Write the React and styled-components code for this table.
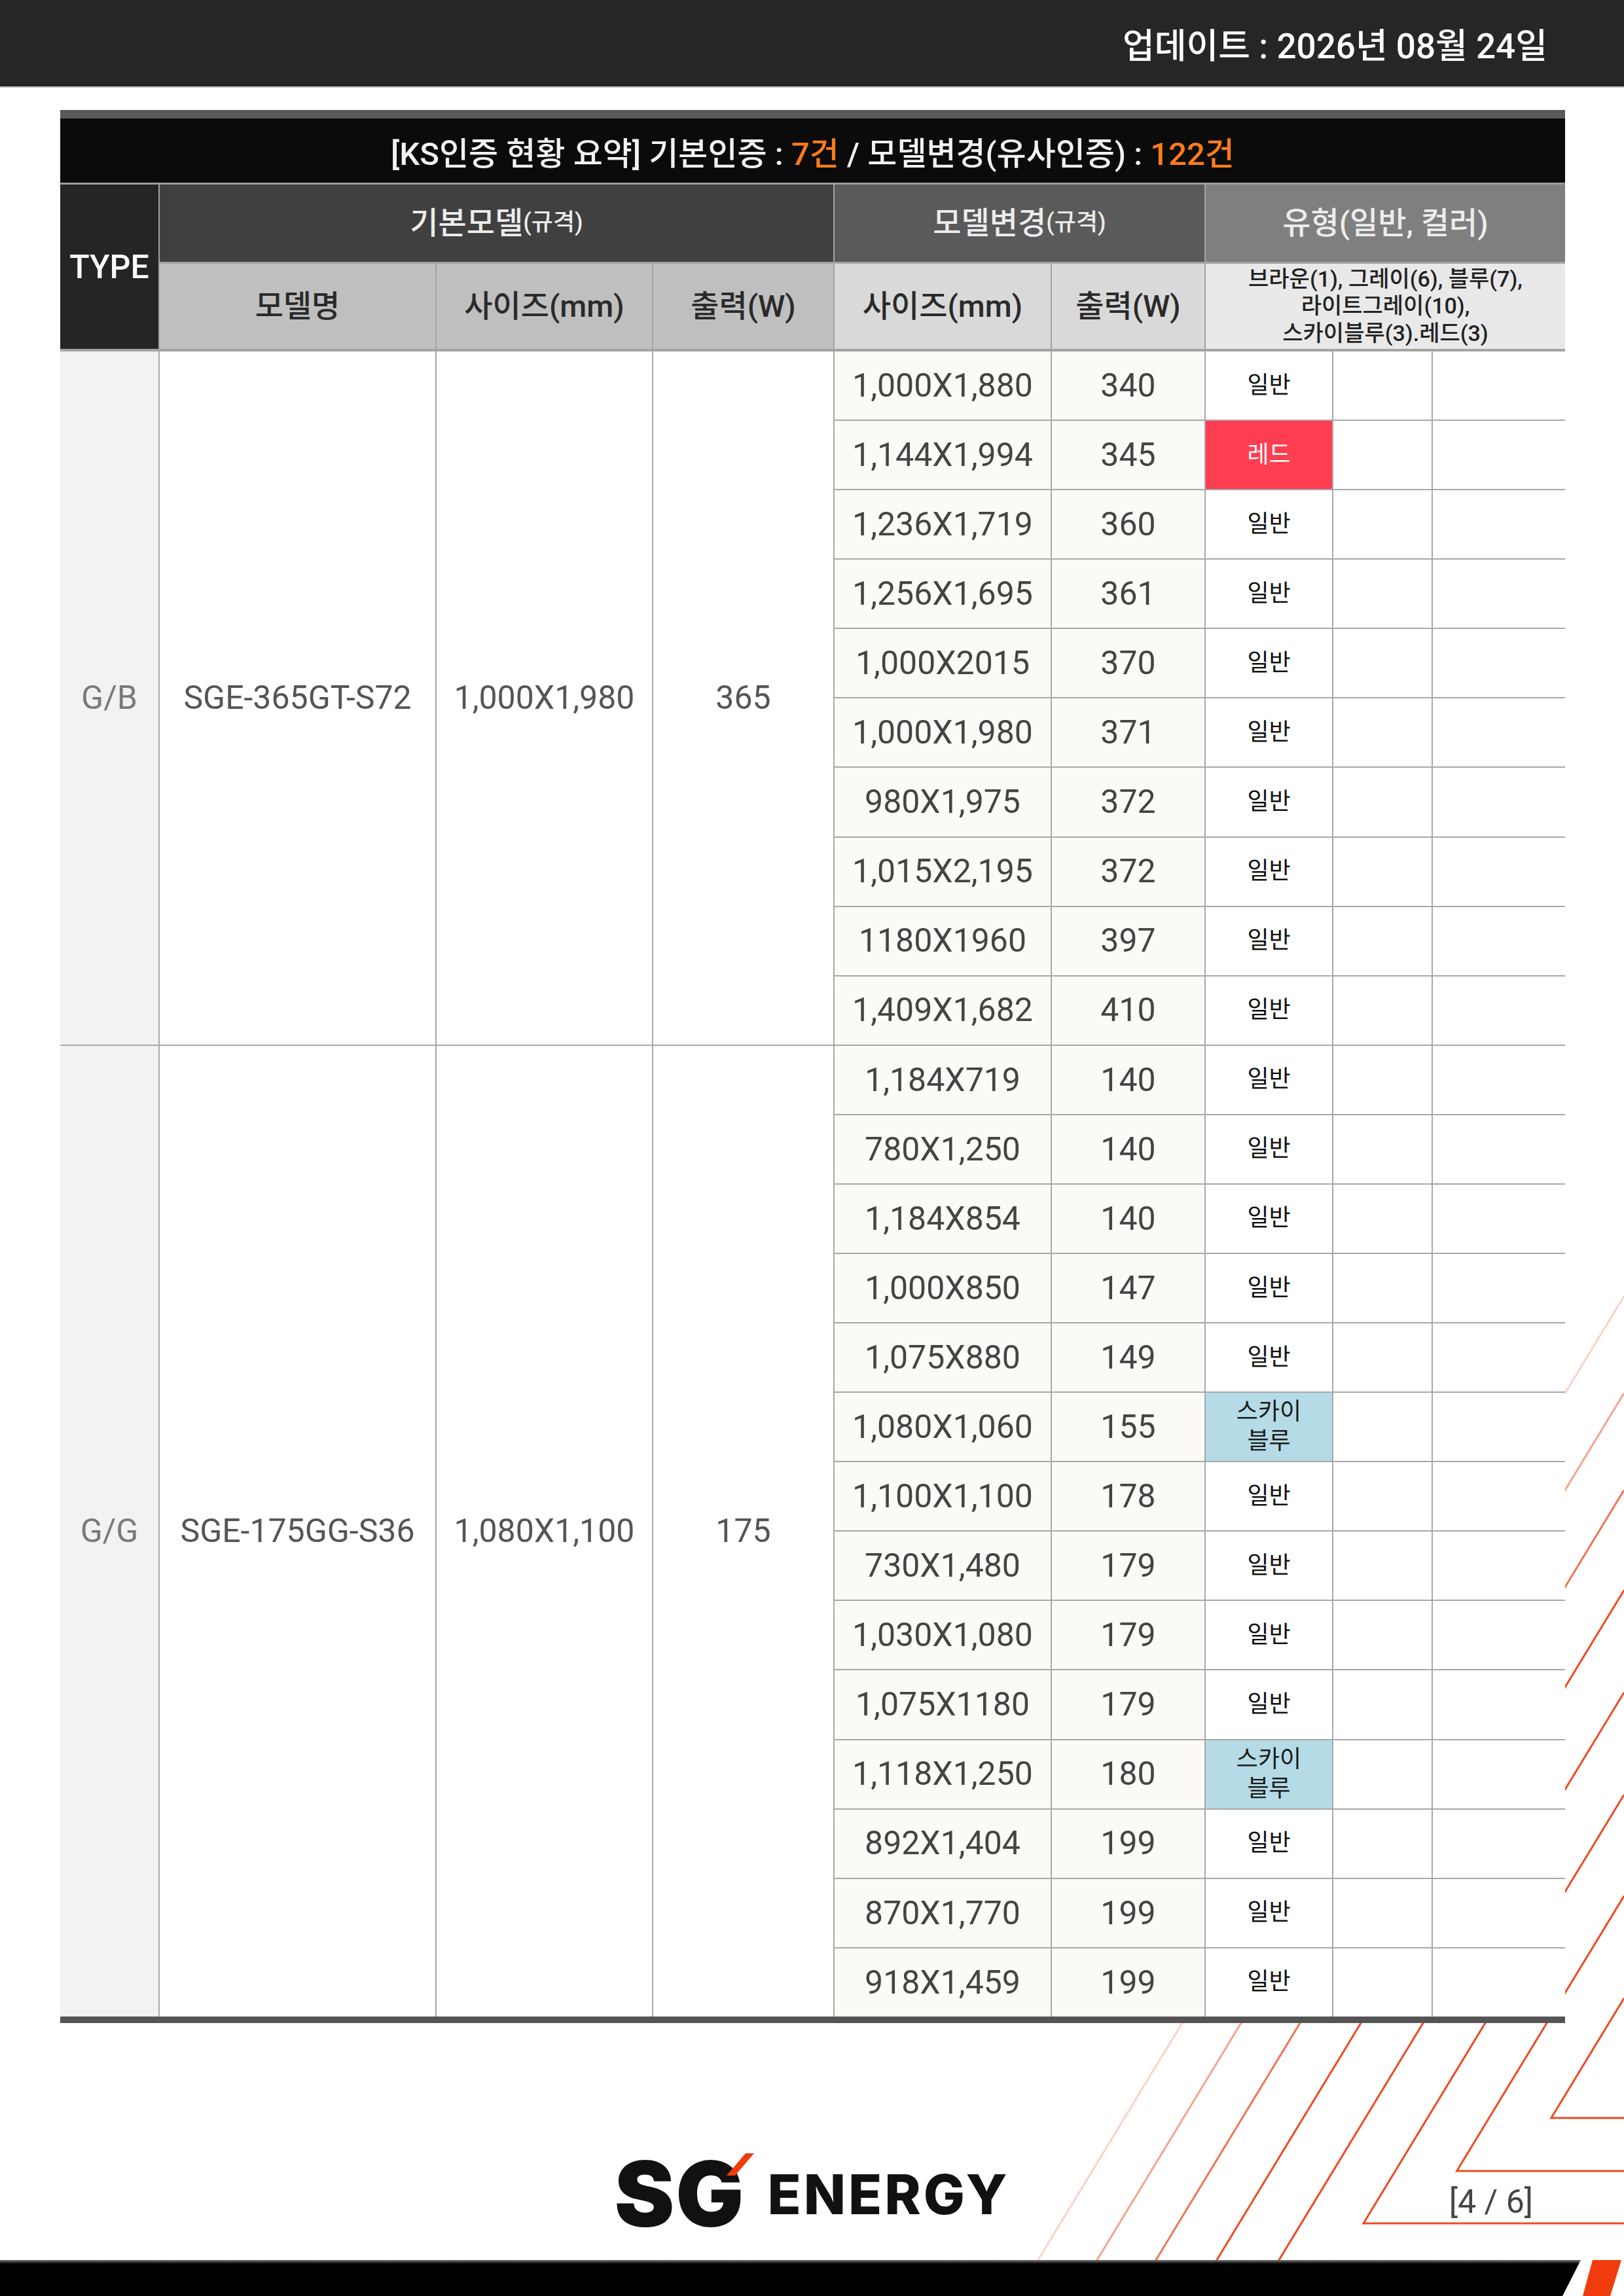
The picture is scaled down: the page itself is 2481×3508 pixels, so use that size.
import React from "react";
import styled, { createGlobalStyle } from "styled-components";

const GlobalStyle = createGlobalStyle`
    html, body {
        margin: 0;
        padding: 0;
        background: #fff;
    }
    body {
        font-family: Roboto, "Noto Sans CJK KR", sans-serif;
    }
`;

// column widths of the sheet, lines are the 2px grid gaps
const COLS = "150px 421px 329px 275px 330px 233px 193px 150px 202px";
const ORANGE = "#ee4a24";
const SLOPE = 1.645;

const STRIPES = [
    { c: 3685, color: "#f8d3c9" },
    { c: 3775, color: "#f3a48f" },
    { c: 3865, color: "#ef7555" },
    { c: 3958, color: ORANGE },
    { c: 4053, color: ORANGE },
    { c: 4148, color: ORANGE, foot: 3397 },
    { c: 4242, color: ORANGE, foot: 3317 },
    { c: 4337, color: ORANGE, foot: 3236 },
];

const GROUPS = [
    {
        type: "G/B",
        model: "SGE-365GT-S72",
        size: "1,000X1,980",
        power: "365",
        rows: [
            ["1,000X1,880", "340", "일반"],
            ["1,144X1,994", "345", "레드"],
            ["1,236X1,719", "360", "일반"],
            ["1,256X1,695", "361", "일반"],
            ["1,000X2015", "370", "일반"],
            ["1,000X1,980", "371", "일반"],
            ["980X1,975", "372", "일반"],
            ["1,015X2,195", "372", "일반"],
            ["1180X1960", "397", "일반"],
            ["1,409X1,682", "410", "일반"],
        ],
    },
    {
        type: "G/G",
        model: "SGE-175GG-S36",
        size: "1,080X1,100",
        power: "175",
        rows: [
            ["1,184X719", "140", "일반"],
            ["780X1,250", "140", "일반"],
            ["1,184X854", "140", "일반"],
            ["1,000X850", "147", "일반"],
            ["1,075X880", "149", "일반"],
            ["1,080X1,060", "155", "스카이블루"],
            ["1,100X1,100", "178", "일반"],
            ["730X1,480", "179", "일반"],
            ["1,030X1,080", "179", "일반"],
            ["1,075X1180", "179", "일반"],
            ["1,118X1,250", "180", "스카이블루"],
            ["892X1,404", "199", "일반"],
            ["870X1,770", "199", "일반"],
            ["918X1,459", "199", "일반"],
        ],
    },
];

const KIND = {
    일반: { bg: "#fff", fg: "#111", label: "일반" },
    레드: { bg: "#ff3d51", fg: "#fff", label: "레드" },
    스카이블루: {
        bg: "#b4dbe6",
        fg: "#1a1a1a",
        label: (
            <>
                스카이
                <br />
                블루
            </>
        ),
    },
};

const Page = styled.div`
    position: relative;
    width: 2481px;
    height: 3508px;
    overflow: hidden;
    background: #fff;
`;

const Stripes = styled.svg`
    position: absolute;
    left: 0;
    top: 0;
    z-index: 0;
`;

const Layer = styled.div`
    position: relative;
    z-index: 1;
    height: 100%;
    display: flex;
    flex-direction: column;
`;

const TopBar = styled.header`
    height: 132px;
    background: #262626;
    border-bottom: 2px solid #c4c4c4;
    display: flex;
    align-items: center;
    justify-content: flex-end;
    padding-right: 117px;
    color: #fff;
    font-size: 53px;
    font-weight: 500;
`;

const Sheet = styled.section`
    width: 2299px;
    margin: 34px 0 0 92px;
`;

const TitleBar = styled.div`
    height: 98px;
    border-top: 13px solid #5a5a5a;
    border-bottom: 3px solid #9c9c9c;
    background: #0b0b0b;
    display: flex;
    align-items: center;
    justify-content: center;
    color: #f2f2f2;
    font-size: 49px;
    font-weight: 500;
    .hl {
        color: #ff7b1c;
    }
`;

const HeadGrid = styled.div`
    display: grid;
    grid-template-columns: ${COLS};
    grid-template-rows: 118px 130px;
    column-gap: 2px;
    row-gap: 3px;
    background: #a3a3a3;
    border-bottom: 4px solid #a3a3a3;
`;

const HeadCell = styled.div`
    grid-column: span ${(p) => p.$span || 1};
    grid-row: span ${(p) => p.$rows || 1};
    display: flex;
    align-items: center;
    justify-content: center;
    text-align: center;
    background: ${(p) => p.$bg};
    color: ${(p) => p.$fg || "#2a2a2a"};
    font-size: ${(p) => p.$size || 47}px;
    font-weight: 500;
    line-height: ${(p) => p.$lh || 1.2};
    small {
        font-size: 36px;
        font-weight: 500;
    }
`;

const BodyGrid = styled.div`
    display: grid;
    grid-template-columns: ${COLS};
    grid-auto-rows: 104.08px;
    gap: 2px;
    background: #a8a8a8;
    border-bottom: 10px solid #555;
`;

const Cell = styled.div`
    grid-row: span ${(p) => p.$rows || 1};
    display: flex;
    align-items: center;
    justify-content: center;
    text-align: center;
    background: ${(p) => p.$bg || "#fff"};
    color: ${(p) => p.$fg || "#444"};
    font-size: ${(p) => p.$size || 50}px;
    line-height: 1.25;
`;

const Footer = styled.footer`
    flex: 1;
    display: grid;
    grid-template-columns: 1fr auto 1fr;
    align-items: end;
    padding: 0 139px 48px;
`;

const Logo = styled.div`
    grid-column: 2;
    display: flex;
    align-items: center;
    color: #111;
    font-family: Inter, "Liberation Sans", sans-serif;
`;

const LogoMark = styled.div`
    position: relative;
    font-size: 138px;
    font-weight: 900;
    line-height: 0.76;
    letter-spacing: 2px;
    svg {
        position: absolute;
        top: -10px;
        right: -14px;
    }
`;

const LogoWord = styled.div`
    margin-left: 34px;
    font-size: 84px;
    font-weight: 800;
    line-height: 1;
    letter-spacing: 4px;
`;

const PageNo = styled.div`
    justify-self: end;
    margin-bottom: 12px;
    color: #444;
    font-size: 50px;
`;

const BottomBar = styled.div`
    height: 55px;
    display: flex;
`;

const BlackBand = styled.div`
    width: 2415px;
    background: linear-gradient(to bottom, #777 0, #000 6px, #000 100%);
    clip-path: polygon(0 0, 100% 0, calc(100% - 28px) 100%, 0 100%);
`;

const OrangeBand = styled.div`
    width: 59px;
    margin-left: 3px;
    background: #f03c0c;
    clip-path: polygon(15px 0, 100% 0, 42px 100%, 0 100%);
`;

function StripeLayer() {
    return (
        <Stripes width="2481" height="3508" viewBox="0 0 2481 3508">
            {STRIPES.map((s) => {
                const top = (s.c - 2481) * SLOPE;
                const endY = s.foot || 3508;
                const endX = s.c - endY / SLOPE;
                const pts = s.foot
                    ? `2481,${top} ${endX},${endY} 2481,${endY}`
                    : `2481,${top} ${endX},${endY}`;
                return (
                    <polyline
                        key={s.c}
                        points={pts}
                        fill="none"
                        stroke={s.color}
                        strokeWidth="3"
                    />
                );
            })}
        </Stripes>
    );
}

function Group({ g }) {
    const span = g.rows.length;
    return (
        <>
            <Cell $rows={span} $bg="#f2f2f2" $fg="#7a7a7a">
                {g.type}
            </Cell>
            <Cell $rows={span} $fg="#555">
                {g.model}
            </Cell>
            <Cell $rows={span} $fg="#555">
                {g.size}
            </Cell>
            <Cell $rows={span} $fg="#555">
                {g.power}
            </Cell>
            {g.rows.map(([size, power, kind], i) => {
                const k = KIND[kind];
                return (
                    <React.Fragment key={i}>
                        <Cell $bg="#fcfaf6">{size}</Cell>
                        <Cell $bg="#fcfaf6">{power}</Cell>
                        <Cell $bg={k.bg} $fg={k.fg} $size={36}>
                            {k.label}
                        </Cell>
                        <Cell />
                        <Cell />
                    </React.Fragment>
                );
            })}
        </>
    );
}

export default function App() {
    return (
        <Page>
            <GlobalStyle />
            <StripeLayer />
            <Layer>
                <TopBar>업데이트 : 2026년 08월 24일</TopBar>
                <Sheet>
                    <TitleBar>
                        [KS인증 현황 요약] 기본인증 :&nbsp;
                        <span className="hl">7건</span>&nbsp;/
                        모델변경(유사인증) :&nbsp;
                        <span className="hl">122건</span>
                    </TitleBar>
                    <HeadGrid>
                        <HeadCell $rows={2} $bg="#252525" $fg="#fff" $size={50}>
                            TYPE
                        </HeadCell>
                        <HeadCell $span={3} $bg="#404040" $fg="#ececec">
                            기본모델<small>(규격)</small>
                        </HeadCell>
                        <HeadCell $span={2} $bg="#5a5a5a" $fg="#ececec">
                            모델변경<small>(규격)</small>
                        </HeadCell>
                        <HeadCell $span={3} $bg="#7f7f7f" $fg="#ececec">
                            유형(일반, 컬러)
                        </HeadCell>
                        <HeadCell $bg="#bfbfbf">모델명</HeadCell>
                        <HeadCell $bg="#bfbfbf">사이즈(mm)</HeadCell>
                        <HeadCell $bg="#bfbfbf">출력(W)</HeadCell>
                        <HeadCell $bg="#d9d9d9">사이즈(mm)</HeadCell>
                        <HeadCell $bg="#d9d9d9">출력(W)</HeadCell>
                        <HeadCell $span={3} $bg="#e9e9e9" $fg="#222" $size={34} $lh={1.22}>
                            브라운(1), 그레이(6), 블루(7),
                            <br />
                            라이트그레이(10),
                            <br />
                            스카이블루(3).레드(3)
                        </HeadCell>
                    </HeadGrid>
                    <BodyGrid>
                        {GROUPS.map((g) => (
                            <Group key={g.type} g={g} />
                        ))}
                    </BodyGrid>
                </Sheet>
                <Footer>
                    <Logo>
                        <LogoMark>
                            SG
                            <svg width="42" height="34" viewBox="0 0 42 34">
                                <polygon points="29,0 42,0 13,34 0,34" fill="#f03c0c" />
                            </svg>
                        </LogoMark>
                        <LogoWord>ENERGY</LogoWord>
                    </Logo>
                    <PageNo>[4 / 6]</PageNo>
                </Footer>
                <BottomBar>
                    <BlackBand />
                    <OrangeBand />
                </BottomBar>
            </Layer>
        </Page>
    );
}
